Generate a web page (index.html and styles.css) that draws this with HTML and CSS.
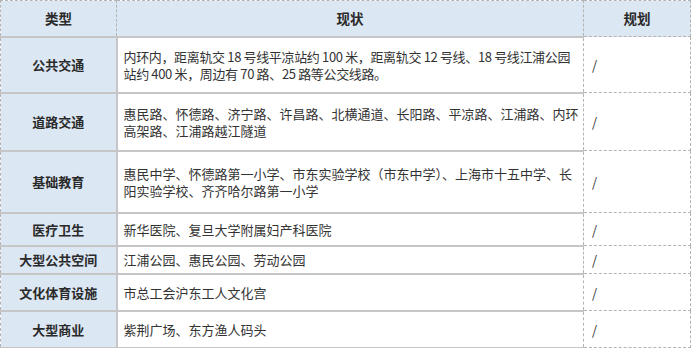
FILE: index.html
```html
<!DOCTYPE html>
<html lang="zh-CN">
<head>
<meta charset="utf-8">
<link rel="stylesheet" href="styles.css">
</head>
<body>
<table class="grid">
  <colgroup>
    <col class="c-type">
    <col class="c-now">
    <col class="c-plan">
  </colgroup>
  <thead>
    <tr class="r-head">
      <th class="th">类型</th>
      <th class="th">现状</th>
      <th class="th th-plan">规划</th>
    </tr>
  </thead>
  <tbody>
    <tr class="r1">
      <td class="type">公共交通</td>
      <td class="now tight">内环内，距离轨交 18 号线平凉站约 100 米，距离轨交 12 号线、18 号线江浦公园<br>站约 400 米，周边有 70 路、25 路等公交线路。</td>
      <td class="plan">/</td>
    </tr>
    <tr class="r2">
      <td class="type">道路交通</td>
      <td class="now">惠民路、怀德路、济宁路、许昌路、北横通道、长阳路、平凉路、江浦路、内环<br>高架路、江浦路越江隧道</td>
      <td class="plan">/</td>
    </tr>
    <tr class="r3">
      <td class="type">基础教育</td>
      <td class="now">惠民中学、怀德路第一小学、市东实验学校（市东中学）、上海市十五中学、长<br>阳实验学校、齐齐哈尔路第一小学</td>
      <td class="plan">/</td>
    </tr>
    <tr class="r4">
      <td class="type">医疗卫生</td>
      <td class="now">新华医院、复旦大学附属妇产科医院</td>
      <td class="plan">/</td>
    </tr>
    <tr class="r5">
      <td class="type">大型公共空间</td>
      <td class="now">江浦公园、惠民公园、劳动公园</td>
      <td class="plan">/</td>
    </tr>
    <tr class="r6">
      <td class="type">文化体育设施</td>
      <td class="now">市总工会沪东工人文化宫</td>
      <td class="plan">/</td>
    </tr>
    <tr class="r7">
      <td class="type">大型商业</td>
      <td class="now">紫荆广场、东方渔人码头</td>
      <td class="plan">/</td>
    </tr>
  </tbody>
</table>
</body>
</html>
```
FILE: styles.css
```css
html, body {
  margin: 0;
  padding: 0;
  background: #ffffff;
}
body {
  font-family: "Noto Sans CJK SC", "Noto Sans", sans-serif;
  font-size: 13px;
  line-height: 17px;
  color: #333333;
}
.grid {
  border-collapse: collapse;
  table-layout: fixed;
  width: 690px;
}
.c-type { width: 116px; }
.c-now { width: 467px; }
.c-plan { width: 107px; }

.th, .type, .now, .plan {
  padding: 0;
  vertical-align: middle;
  border: 1px dashed #b4b4b4;
}
.th {
  background: #dce7f4;
  font-weight: bold;
  font-size: 13.5px;
  text-align: center;
  color: #2a2a2a;
}
.type {
  background: #dce7f4;
  font-weight: bold;
  text-align: center;
  color: #2a2a2a;
  border-top: 2px solid #c6c6c6;
  border-right: 2px solid #c6c6c6;
}
.now {
  padding-left: 6px;
  white-space: nowrap;
  overflow: hidden;
  border-top: 2px solid #c6c6c6;
  border-right: 1px dashed #b4b4b4;
}
.tight {
  letter-spacing: -0.35px;
}
.plan {
  padding-left: 8px;
}
.r-head { height: 36px; }
.r1 { height: 56px; }
.r2 { height: 58px; }
.r3 { height: 62px; }
.r4 { height: 33px; }
.r5 { height: 28px; }
.r6 { height: 37px; }
.r7 { height: 37px; }
.r7 .type, .r7 .now {
  border-bottom: 2px solid #c6c6c6;
}
```
